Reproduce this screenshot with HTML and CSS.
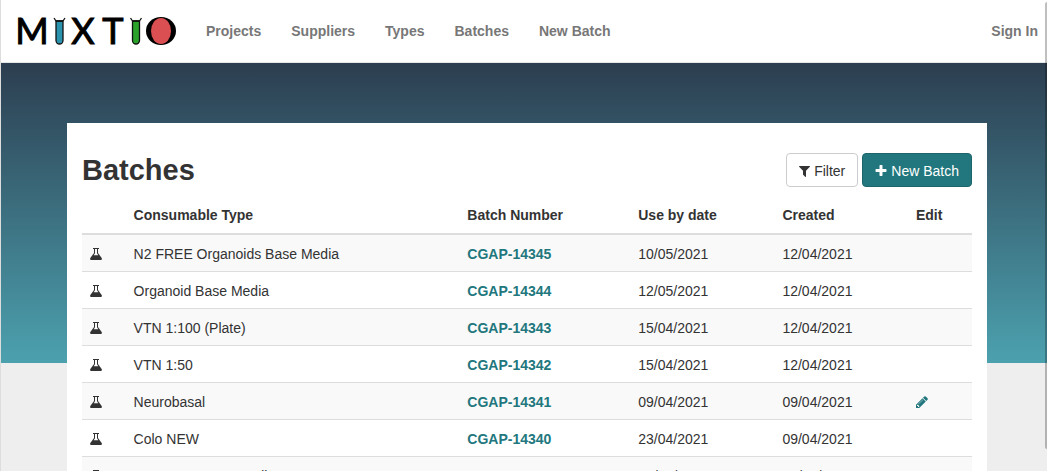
FILE: index.html
```html
<!DOCTYPE html>
<html lang="en">
<head>
<meta charset="utf-8">
<title>Mixtio - Batches</title>
<link rel="stylesheet" href="styles.css">
</head>
<body>
<svg class="symbols" aria-hidden="true">
  <symbol id="flask" viewBox="0 0 12 12">
    <path d="M3 0h6v1H8v4l3.700 5Q12.300 12 11 12H1Q-.3 12 .3 10L4 5V1H3zM5 1v4.300L3.700 7.200h4.600L7 5.300V1z" fill-rule="evenodd"/>
  </symbol>
  <symbol id="filter" viewBox="0 0 1408 1792">
    <path d="M1403 295q17 41-14 70l-493 493v742q0 42-39 59-13 5-25 5-27 0-45-19l-256-256q-19-19-19-45v-486l-493-493q-31-29-14-70 17-39 59-39h1280q42 0 59 39z"/>
  </symbol>
  <symbol id="plus" viewBox="192 0 1408 1792">
    <path d="M1600 736v192q0 40-28 68t-68 28h-416v416q0 40-28 68t-68 28h-192q-40 0-68-28t-28-68v-416h-416q-40 0-68-28t-28-68v-192q0-40 28-68t68-28h416v-416q0-40 28-68t68-28h192q40 0 68 28t28 68v416h416q40 0 68 28t28 68z"/>
  </symbol>
  <symbol id="pencil" viewBox="128 128 1536 1536">
    <path d="M491 1536l91-91-235-235-91 91v107h128v128h107zm523-928q0-22-22-22-10 0-17 7l-542 542q-7 7-7 17 0 22 22 22 10 0 17-7l542-542q7-7 7-17zm-54-192l416 416-832 832h-416v-416zm683 96q0 53-37 90l-166 166-416-416 166-165q36-38 90-38 53 0 91 38l235 234q37 39 37 91z"/>
  </symbol>
</svg>
<div class="page">
  <header class="navbar">
    <a class="brand" href="#" aria-label="Mixtio">
      <svg class="logo" viewBox="0 0 160 46" role="img" aria-label="Mixtio">
        <text class="logo-letter" x="16" y="36">M</text>
        <text class="logo-letter" x="67" y="36">X</text>
        <text class="logo-letter" x="97" y="36">T</text>
        <g stroke="#111" stroke-width="1.300" stroke-linejoin="round">
          <path d="M40 13h7v19.500a3.500 3.500 0 0 1-7 0z" fill="#2b93ae"/>
          <path d="M38 10l2 3h7l2-3" fill="none"/>
          <path d="M116.500 13h7v19.500a3.500 3.500 0 0 1-7 0z" fill="#2ba32b"/>
          <path d="M114.500 10l2 3h7l2-3" fill="none"/>
        </g>
        <ellipse cx="145" cy="23" rx="15" ry="14" fill="#000"/>
        <ellipse cx="145" cy="23" rx="10" ry="13" fill="#d94f52"/>
      </svg>
    </a>
    <nav class="nav">
      <a href="#">Projects</a>
      <a href="#">Suppliers</a>
      <a href="#">Types</a>
      <a href="#">Batches</a>
      <a href="#">New Batch</a>
    </nav>
    <a class="sign-in" href="#">Sign In</a>
  </header>
  <main class="content">
    <section class="card">
      <div class="card-head">
        <h1>Batches</h1>
        <div class="actions">
          <button class="btn" type="button"><svg class="icon-filter"><use href="#filter"/></svg>Filter</button>
          <a class="btn btn-primary" href="#"><svg class="icon-plus"><use href="#plus"/></svg>New Batch</a>
        </div>
      </div>
      <table class="batches">
        <colgroup><col class="col-icon"><col class="col-type"><col class="col-number"><col class="col-use"><col class="col-created"><col class="col-edit"></colgroup>
        <thead>
          <tr><th></th><th>Consumable Type</th><th>Batch Number</th><th>Use by date</th><th>Created</th><th>Edit</th></tr>
        </thead>
        <tbody>
          <tr><td><svg class="flask"><use href="#flask"/></svg></td><td>N2 FREE Organoids Base Media</td><td><a href="#">CGAP-14345</a></td><td>10/05/2021</td><td>12/04/2021</td><td></td></tr>
          <tr><td><svg class="flask"><use href="#flask"/></svg></td><td>Organoid Base Media</td><td><a href="#">CGAP-14344</a></td><td>12/05/2021</td><td>12/04/2021</td><td></td></tr>
          <tr><td><svg class="flask"><use href="#flask"/></svg></td><td>VTN 1:100 (Plate)</td><td><a href="#">CGAP-14343</a></td><td>15/04/2021</td><td>12/04/2021</td><td></td></tr>
          <tr><td><svg class="flask"><use href="#flask"/></svg></td><td>VTN 1:50</td><td><a href="#">CGAP-14342</a></td><td>15/04/2021</td><td>12/04/2021</td><td></td></tr>
          <tr><td><svg class="flask"><use href="#flask"/></svg></td><td>Neurobasal</td><td><a href="#">CGAP-14341</a></td><td>09/04/2021</td><td>09/04/2021</td><td><a href="#" aria-label="Edit CGAP-14341"><svg class="pencil"><use href="#pencil"/></svg></a></td></tr>
          <tr><td><svg class="flask"><use href="#flask"/></svg></td><td>Colo NEW</td><td><a href="#">CGAP-14340</a></td><td>23/04/2021</td><td>09/04/2021</td><td></td></tr>
          <tr><td><svg class="flask"><use href="#flask"/></svg></td><td>CRISPR DMEM Media</td><td><a href="#">CGAP-14339</a></td><td>09/05/2021</td><td>09/04/2021</td><td></td></tr>
        </tbody>
      </table>
    </section>
  </main>
  <div class="scroll-thumb"></div>
</div>
</body>
</html>
```
FILE: styles.css
```css
* {
  box-sizing: border-box;
}

body {
  margin: 0;
  background: #eee;
  color: #333;
  font: 14px/20px "Liberation Sans", Arial, sans-serif;
}

a {
  color: #21777d;
  text-decoration: none;
}

.symbols {
  display: none;
}

.page {
  position: relative;
  height: 100vh;
  overflow: hidden;
  border-left: 1px solid #ddd;
}

.navbar {
  display: flex;
  align-items: center;
  height: 63px;
  padding-right: 9px;
  background: #fff;
  border-bottom: 1px solid #e7e7e7;
}

.brand {
  display: flex;
  margin-left: 15px;
}

.logo {
  width: 160px;
  height: 46px;
  overflow: visible;
}

.logo-letter {
  font: 36px Lato, sans-serif;
  fill: #000;
  stroke: #000;
  stroke-width: 1px;
  text-anchor: middle;
}

.nav {
  display: flex;
  flex: 1;
  gap: 30px;
  margin-left: 30px;
}

.nav a,
.sign-in {
  color: #777;
  font-weight: bold;
}

.content {
  padding: 60px 60px 0 66px;
  background: linear-gradient(#2c3e50, #4ca1af) no-repeat top / 100% 300px;
}

.card {
  padding: 30px 15px;
  background: #fff;
}

.card-head {
  display: flex;
  align-items: center;
  justify-content: space-between;
  margin-bottom: 10px;
}

h1 {
  margin: 0;
  font-size: 29px;
  line-height: 34px;
}

.actions {
  display: flex;
  gap: 4px;
}

.btn {
  display: flex;
  align-items: center;
  gap: 4px;
  height: 34px;
  padding: 1px 12px 0;
  border: 1px solid #ccc;
  border-radius: 4px;
  background: #fff;
  color: #333;
  font: inherit;
}

.btn-primary {
  border-color: #1c666b;
  background: #21777d;
  color: #fff;
}

.icon-filter,
.icon-plus {
  width: 11px;
  height: 14px;
  fill: currentColor;
}

.icon-plus {
  width: 12px;
}

.batches {
  width: 100%;
  border-collapse: separate;
  border-spacing: 0;
  table-layout: fixed;
}

.col-icon { width: 4.9%; }
.col-type { width: 37.5%; }
.col-number { width: 19.2%; }
.col-use { width: 16.2%; }
.col-created { width: 15%; }
.col-edit { width: 7.2%; }

th,
td {
  text-align: left;
  vertical-align: top;
}

th {
  padding: 8px;
  border-bottom: 2px solid #ddd;
}

td {
  padding: 9px 8px 7px;
  border-bottom: 1px solid #ddd;
}

td a {
  font-weight: bold;
}

tbody tr:nth-child(odd) {
  background: #f9f9f9;
}

.flask,
.pencil {
  display: block;
  width: 12px;
  height: 12px;
  margin: 4px 0;
  fill: #333;
}

.pencil {
  fill: #21777d;
}

.scroll-thumb {
  position: absolute;
  top: 2px;
  right: 0;
  width: 2px;
  height: 95%;
  border-radius: 2px 0 0 2px;
  background: rgba(0, 0, 0, 0.25);
}
```
